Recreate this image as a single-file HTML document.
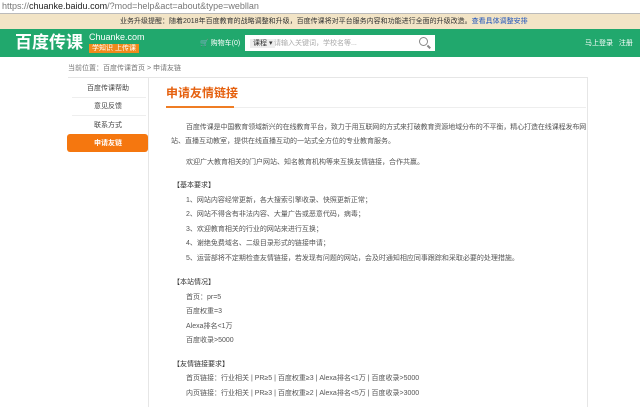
<!DOCTYPE html><html><head><meta charset="utf-8"><style>
*{margin:0;padding:0;box-sizing:border-box}
body{width:640px;height:405px;overflow:hidden;background:#fff;font-family:"Liberation Sans","Noto Sans CJK SC",sans-serif;color:#555;position:relative}
.a{position:absolute;white-space:nowrap}
.t{font-size:7px;line-height:9px}
</style></head><body>
<div class="a" style="left:2px;top:0;font-size:9px;line-height:12px;color:#777">https://<span style="color:#222">chuanke.baidu.com</span>/?mod=help&amp;act=about&amp;type=webllan</div>
<div class="a" style="left:0;top:13px;width:640px;height:1px;background:#bbb"></div>
<div class="a" style="left:0;top:14px;width:640px;height:15px;background:#f2e4c6"></div>
<div class="a t" style="left:120px;top:17px;color:#333">业务升级提醒：随着2018年百度教育的战略调整和升级，百度传课将对平台服务内容和功能进行全面的升级改造。<span style="color:#2255bb">查看具体调整安排</span></div>
<div class="a" style="left:0;top:29px;width:640px;height:28px;background:#21a86d"></div>
<div class="a" style="left:15px;top:33px;font-size:17px;line-height:20px;color:#fff;font-weight:bold">百度传课</div>
<div class="a" style="left:89px;top:32px;font-size:9px;line-height:11px;color:#fff">Chuanke.com</div>
<div class="a t" style="left:89px;top:44px;background:#f08a1c;color:#fff;padding:0 3px;line-height:9px">学知识 上传课</div>
<div class="a t" style="left:200px;top:39px;color:#fff">🛒 购物车(0)</div>
<div class="a" style="left:245px;top:35px;width:190px;height:16px;background:#fff"></div>
<div class="a t" style="left:250px;top:39px;color:#333;background:#eee;padding:0 3px">课程 ▾</div>
<div class="a t" style="left:274px;top:39px;color:#aaa">请输入关键词，学校名等...</div>
<div class="a" style="left:419px;top:37px;width:9px;height:9px;border:1.5px solid #888;border-radius:50%"></div>
<div class="a" style="left:427px;top:46px;width:4px;height:1.5px;background:#888;transform:rotate(45deg)"></div>
<div class="a t" style="left:585px;top:39px;color:#fff">马上登录 &nbsp; 注册</div>
<div class="a t" style="left:68px;top:64px;color:#777">当前位置：百度传课首页 &gt; 申请友链</div>
<div class="a" style="left:68px;top:77px;width:520px;height:1px;background:#e6e6e6"></div>
<div class="a" style="left:148px;top:77px;width:1px;height:330px;background:#e6e6e6"></div>
<div class="a" style="left:587px;top:77px;width:1px;height:330px;background:#e6e6e6"></div>
<div class="a t" style="left:68px;top:84px;width:80px;text-align:center;color:#444">百度传课帮助</div>
<div class="a" style="left:72px;top:97px;width:74px;height:1px;background:#eee"></div>
<div class="a t" style="left:68px;top:102px;width:80px;text-align:center;color:#444">意见反馈</div>
<div class="a" style="left:72px;top:115px;width:74px;height:1px;background:#eee"></div>
<div class="a t" style="left:68px;top:121px;width:80px;text-align:center;color:#444">联系方式</div>
<div class="a" style="left:67px;top:134px;width:81px;height:18px;background:#f5770f;border-radius:3px"></div>
<div class="a t" style="left:68px;top:139px;width:80px;text-align:center;color:#fff;font-weight:bold">申请友链</div>
<div class="a" style="left:166px;top:86px;font-size:12px;line-height:14px;color:#e5600e;font-weight:bold">申请友情链接</div>
<div class="a" style="left:166px;top:107px;width:420px;height:1px;background:#eee"></div>
<div class="a" style="left:166px;top:106px;width:68px;height:2px;background:#ef7d24"></div>
<div class="a t" style="left:186px;top:123px;letter-spacing:-0.1px">百度传课是中国教育领域新兴的在线教育平台，致力于用互联网的方式来打破教育资源地域分布的不平衡，精心打造在线课程发布网</div>
<div class="a t" style="left:171px;top:137px">站、直播互动教室，提供在线直播互动的一站式全方位的专业教育服务。</div>
<div class="a t" style="left:186px;top:158px">欢迎广大教育相关的门户网站、知名教育机构等来互换友情链接，合作共赢。</div>
<div class="a t" style="left:173px;top:181px;color:#333">【基本要求】</div>
<div class="a t" style="left:186px;top:196px">1、网站内容经常更新，各大搜索引擎收录、快照更新正常；</div>
<div class="a t" style="left:186px;top:210px">2、网站不得含有非法内容、大量广告或恶意代码，病毒；</div>
<div class="a t" style="left:186px;top:225px">3、欢迎教育相关的行业的网站来进行互换；</div>
<div class="a t" style="left:186px;top:239px">4、谢绝免费域名、二级目录形式的链接申请；</div>
<div class="a t" style="left:186px;top:254px">5、运营部将不定期检查友情链接，若发现有问题的网站，会及时通知相应同事跟踪和采取必要的处理措施。</div>
<div class="a t" style="left:173px;top:278px;color:#333">【本站情况】</div>
<div class="a t" style="left:186px;top:293px">首页：pr=5</div>
<div class="a t" style="left:186px;top:307px">百度权重=3</div>
<div class="a t" style="left:186px;top:322px">Alexa排名&lt;1万</div>
<div class="a t" style="left:186px;top:336px">百度收录&gt;5000</div>
<div class="a t" style="left:173px;top:360px;color:#333">【友情链接要求】</div>
<div class="a t" style="left:186px;top:374px">首页链接：行业相关 | PR≥5 | 百度权重≥3 | Alexa排名&lt;1万 | 百度收录&gt;5000</div>
<div class="a t" style="left:186px;top:389px">内页链接：行业相关 | PR≥3 | 百度权重≥2 | Alexa排名&lt;5万 | 百度收录&gt;3000</div>
</body></html>
